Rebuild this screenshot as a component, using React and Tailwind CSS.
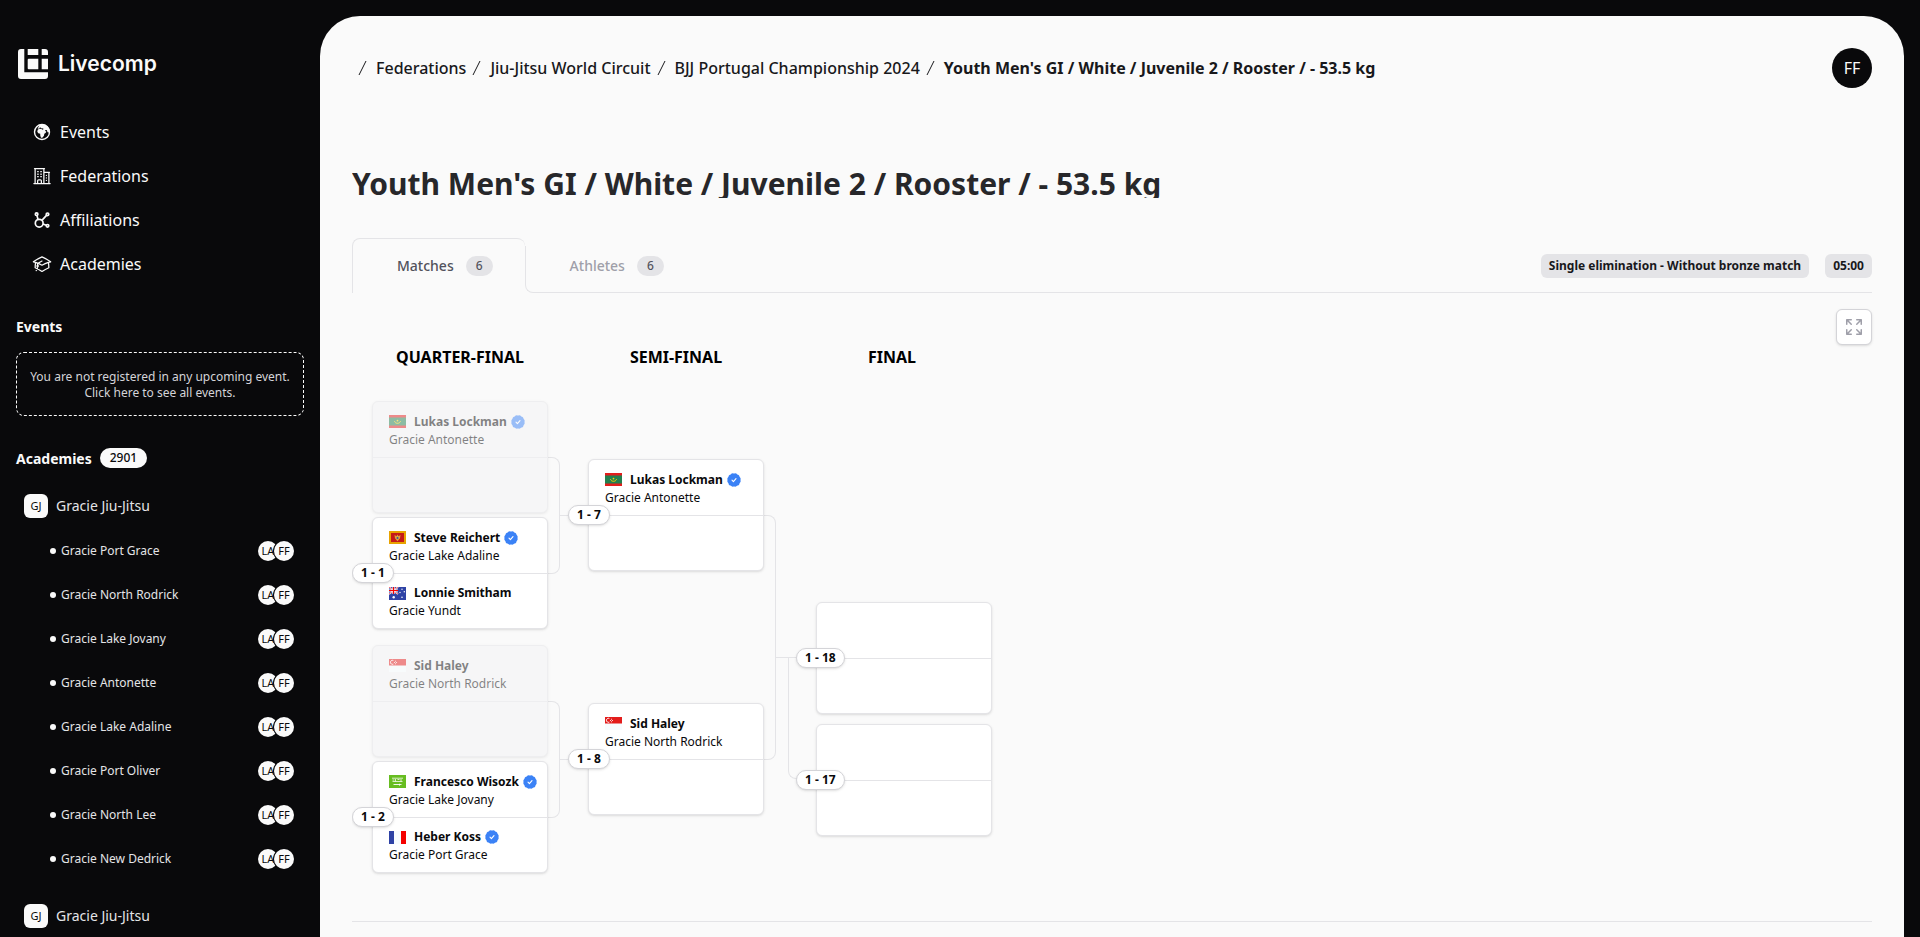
import React, { useState } from 'react';
import { HiOutlineBuildingOffice2, HiOutlineAcademicCap, HiMiniArrowsPointingOut } from 'react-icons/hi2';

const TITLE = "Youth Men's GI / White / Juvenile 2 / Rooster / - 53.5 kg";

const GlobeIcon = () => (
  <svg viewBox="0 0 20 20" className="w-5 h-5" aria-hidden="true">
    <circle cx="10" cy="10" r="7.5" fill="none" stroke="currentColor" strokeWidth="1.4" />
    <path fill="currentColor" d="M7.2 3.2C11 1.4 16.8 3.6 17.6 8.4l-.5 2.2-1.5-.3-.9-2.2-1.6-.2.3 1.2 1 .6-.9 1.2-1.2.9-.3 2-1.7 1.9-1.3.1-.7-2.1-.1-2-1.9-.5-1-1.5.4-1.9 1.5-1.1 2.4.2.6.8 1.3-.4-.4-1-1.5.1-1-1-1.1.3-.3.9-1.3.1-.2-1 1.1-.7z" />
  </svg>
);

const NodesIcon = () => (
  <svg viewBox="0 0 20 20" className="w-5 h-5" fill="none" stroke="currentColor" strokeWidth="1.7" aria-hidden="true">
    <circle cx="7.2" cy="13.2" r="3.9" />
    <circle cx="4.6" cy="4.2" r="1.3" />
    <circle cx="15.5" cy="4.3" r="1.3" />
    <circle cx="15.5" cy="15.8" r="1.3" />
    <path d="M5 5.6l1 3.8M14.500 5.300l-4.600 5M11 14l3.200 1.300" />
  </svg>
);

const Logo = () => (
  <svg viewBox="0 0 30 30" className="w-[30px] h-[30px]" fill="currentColor" aria-hidden="true">
    <path d="M3 0h3.300v23.300H30V27a3 3 0 0 1-3 3H3a3 3 0 0 1-3-3V3a3 3 0 0 1 3-3z" />
    <path d="M9.700 0h10.600v6H9.700zM23.700 0H27a3 3 0 0 1 3 3v3h-6.300zM10.700 9.700h9.600v10.600h-9.600a1 1 0 0 1-1-1v-8.600a1 1 0 0 1 1-1zM23.700 9.700H30v10.600h-6.300z" />
  </svg>
);

const VerifiedIcon = () => (
  <svg viewBox="0 0 14 14" className="ml-1 w-[14px] h-[14px] shrink-0" aria-label="Verified">
    <g fill="#3b82f6">
      <rect x="1.500" y="1.500" width="11" height="11" rx="2.600" />
      <rect x="1.500" y="1.500" width="11" height="11" rx="2.600" transform="rotate(30 7 7)" />
      <rect x="1.500" y="1.500" width="11" height="11" rx="2.600" transform="rotate(60 7 7)" />
    </g>
    <path d="M5 7.200l1.400 1.400L9 5.600" fill="none" stroke="#fff" strokeWidth="1.100" strokeLinecap="round" strokeLinejoin="round" />
  </svg>
);

const flags = {
  mr: (
    <>
      <path fill="#22804f" d="M0 0h17v13H0z" />
      <path fill="#e31d1c" d="M0 0h17v2.600H0zM0 10.400h17V13H0z" />
      <path d="M5.500 6.200c.6 2.800 5.400 2.800 6 0" fill="none" stroke="#fecf00" strokeWidth="1" />
      <circle cx="8.500" cy="5.600" r=".9" fill="#fecf00" />
    </>
  ),
  me: (
    <>
      <path fill="#e8a300" d="M0 0h17v13H0z" />
      <path fill="#c51918" d="M2 2h13v9H2z" />
      <path d="M5.500 4l2 1.200 1-1.700 1 1.700 2-1.200-.5 3.200-2.500 3-2.500-3z" fill="#e0a53c" />
      <path d="M7.700 6h1.600v2H7.700z" fill="#3d58a0" />
    </>
  ),
  au: (
    <>
      <path fill="#2e42a5" d="M0 0h17v13H0z" />
      <path d="M0 0l9 7M9 0L0 7" stroke="#fff" strokeWidth="1.600" />
      <path d="M0 0l9 7M9 0L0 7" stroke="#f50100" strokeWidth=".6" />
      <path d="M4.500 0v7M0 3.500h9" stroke="#fff" strokeWidth="2.200" />
      <path d="M4.500 0v7M0 3.500h9" stroke="#f50100" strokeWidth="1.200" />
      <g fill="#f7fcff">
        <circle cx="4.700" cy="10.200" r="1.200" />
        <circle cx="13" cy="2.300" r=".7" />
        <circle cx="11" cy="5.500" r=".7" />
        <circle cx="15.300" cy="4.700" r=".7" />
        <circle cx="13" cy="10.300" r=".8" />
      </g>
    </>
  ),
  sg: (
    <>
      <path fill="#f7fcff" d="M0 0h17v13H0z" />
      <path fill="#e31d1c" d="M0 0h17v6.500H0z" />
      <path d="M4.300 1.500a2 2 0 1 0 0 3.600" fill="none" stroke="#fff" strokeWidth="1" />
      <path d="M6 1.700h1v1H6zM5 3h1v1H5zM7 3h1v1H7zM6 4.300h1v1H6z" fill="#fff" opacity=".8" />
    </>
  ),
  sa: (
    <>
      <path fill="#67bd21" d="M0 0h17v13H0z" />
      <path d="M3 3.200h11M3.500 5h2M6.500 4v2.500M8.500 4.500h2M12 4v2.500M3.500 6.500h10" stroke="#fff" strokeWidth=".9" opacity=".85" />
      <path d="M4.500 9.500h8M10.500 8.800v1.800" stroke="#fff" strokeWidth=".9" />
    </>
  ),
  fr: (
    <>
      <path fill="#f7fcff" d="M0 0h17v13H0z" />
      <path fill="#2e42a5" d="M0 0h5v13H0z" />
      <path fill="#f50100" d="M12 0h5v13h-5z" />
    </>
  ),
};

const navItems = [
  { label: 'Events', icon: <GlobeIcon /> },
  { label: 'Federations', icon: <HiOutlineBuildingOffice2 className="w-5 h-5" /> },
  { label: 'Affiliations', icon: <NodesIcon /> },
  { label: 'Academies', icon: <HiOutlineAcademicCap className="w-5 h-5" /> },
];

const affiliations = [
  {
    name: 'Gracie Jiu-Jitsu',
    academies: ['Gracie Port Grace', 'Gracie North Rodrick', 'Gracie Lake Jovany', 'Gracie Antonette', 'Gracie Lake Adaline', 'Gracie Port Oliver', 'Gracie North Lee', 'Gracie New Dedrick'],
  },
  { name: 'Gracie Jiu-Jitsu', academies: [] },
];

const lukas = { name: 'Lukas Lockman', academy: 'Gracie Antonette', flag: 'mr', verified: true };
const steve = { name: 'Steve Reichert', academy: 'Gracie Lake Adaline', flag: 'me', verified: true };
const lonnie = { name: 'Lonnie Smitham', academy: 'Gracie Yundt', flag: 'au' };
const sid = { name: 'Sid Haley', academy: 'Gracie North Rodrick', flag: 'sg' };
const francesco = { name: 'Francesco Wisozk', academy: 'Gracie Lake Jovany', flag: 'sa', verified: true };
const heber = { name: 'Heber Koss', academy: 'Gracie Port Grace', flag: 'fr', verified: true };

const quarterFinals = [
  [{ top: lukas, bye: true }, { id: '1 - 1', top: steve, bottom: lonnie }],
  [{ top: sid, bye: true }, { id: '1 - 2', top: francesco, bottom: heber }],
];
const semiFinals = [{ id: '1 - 7', top: lukas }, { id: '1 - 8', top: sid }];
const finals = [{ id: '1 - 18' }, { id: '1 - 17' }];

const crumbs = ['Federations', 'Jiu-Jitsu World Circuit', 'BJJ Portugal Championship 2024'];

const Avatar = ({ children }) => (
  <span className="flex w-5 h-5 items-center justify-center rounded-full bg-zinc-50 text-[11px] text-zinc-950 ring-1 ring-zinc-950">
    {children}
  </span>
);

const Sidebar = () => (
  <aside className="w-80 shrink-0 px-4 pt-[49px] overflow-hidden text-zinc-50">
    <a href="#" className="flex items-center gap-[10px] ml-[2px] mb-[31px]">
      <Logo />
      <span className="font-['Inter',sans-serif] text-[21px] leading-7 font-semibold">Livecomp</span>
    </a>
    <nav>
      {navItems.map(item => (
        <a key={item.label} href="#" className="flex h-11 items-center gap-2 px-4">
          {item.icon}
          <span>{item.label}</span>
        </a>
      ))}
    </nav>

    <h2 className="mt-[31px] text-sm font-bold">Events</h2>
    <a href="#" className="mt-[15px] flex h-16 items-center justify-center rounded-lg border border-dashed border-zinc-50 pt-0.5 text-center text-xs text-zinc-300">
      <span>You are not registered in any upcoming event.<br />Click here to see all events.</span>
    </a>

    <div className="mt-8 mb-4 flex h-5 items-center gap-2">
      <h2 className="pt-0.5 text-sm font-bold">Academies</h2>
      <span className="rounded-full bg-zinc-50 px-[10px] text-xs leading-5 font-medium text-zinc-950">2901</span>
    </div>
    {affiliations.map((aff, i) => (
      <section key={i} className="mb-[13px]">
        <a href="#" className="mb-px flex h-11 items-center gap-2 px-2">
          <span className="flex w-6 h-6 items-center justify-center rounded-md bg-zinc-50 text-[11px] text-zinc-950">GJ</span>
          <span className="text-sm text-zinc-200">{aff.name}</span>
        </a>
        <ul>
          {aff.academies.map(name => (
            <li key={name}>
              <a href="#" className="flex h-11 items-center gap-[5px] pl-[34px] pr-[10px] text-xs text-zinc-200">
                <span className="w-1.5 h-1.5 rounded-full bg-zinc-50" />
                <span className="flex-1">{name}</span>
                <span className="flex -space-x-1">
                  <Avatar>LA</Avatar>
                  <Avatar>FF</Avatar>
                </span>
              </a>
            </li>
          ))}
        </ul>
      </section>
    ))}
  </aside>
);

const Slash = () => (
  <svg viewBox="0 0 20 20" className="w-5 h-5 shrink-0" stroke="currentColor" strokeWidth="1" aria-hidden="true">
    <path d="M7 17l7-14" />
  </svg>
);

const Breadcrumbs = () => (
  <nav aria-label="Breadcrumb">
    <ol className="flex items-center text-zinc-900">
      {crumbs.map(c => (
        <li key={c} className="flex items-center gap-1">
          <Slash />
          <a href="#" className="font-medium">{c}</a>
        </li>
      ))}
      <li className="flex items-center gap-1">
        <Slash />
        <a href="#" aria-current="page" className="font-bold">{TITLE}</a>
      </li>
    </ol>
  </nav>
);

const Count = ({ children }) => (
  <span className="rounded-full bg-zinc-200 px-[10px] text-xs leading-5 font-medium text-zinc-600">{children}</span>
);

const Tag = ({ children }) => (
  <span className="rounded-md bg-zinc-200 px-2 text-xs leading-6 font-bold text-zinc-900">{children}</span>
);

const Athlete = ({ athlete }) => {
  if (!athlete) return null;
  return (
    <>
      <div className="flex items-center leading-[18px]">
        <svg viewBox="0 0 17 13" className="mr-2 w-[17px] h-[13px] shrink-0" aria-hidden="true">{flags[athlete.flag]}</svg>
        <span className="font-bold whitespace-nowrap">{athlete.name}</span>
        {athlete.verified && <VerifiedIcon />}
      </div>
      <div className="leading-[18px]">{athlete.academy}</div>
    </>
  );
};

const MatchCard = ({ match }) => (
  <div className={`relative h-28 w-44 rounded-md border border-zinc-200 text-xs text-zinc-950 shadow-sm ${match.bye ? 'bg-zinc-100 opacity-50' : 'bg-white'}`}>
    <div className="flex h-14 flex-col justify-center border-b border-zinc-200 px-4 pt-0.5">
      <Athlete athlete={match.top} />
    </div>
    <div className="flex h-[54px] flex-col justify-center px-4 pt-0.5">
      <Athlete athlete={match.bottom} />
    </div>
    {match.id && (
      <a href="#" className="absolute top-1/2 -left-[21px] -translate-y-1/2 rounded-full border border-zinc-300 bg-white px-2 leading-[18px] font-bold whitespace-nowrap shadow-sm">
        {match.id}
      </a>
    )}
  </div>
);

const RoundTitle = ({ children }) => (
  <h3 className="mb-8 text-center font-bold text-black uppercase">{children}</h3>
);

const Bracket = () => (
  <div className="flex overflow-x-auto pb-2">
    <section className="w-54 shrink-0">
      <RoundTitle>Quarter-final</RoundTitle>
      <div className="flex flex-col gap-4">
        {quarterFinals.map((pair, i) => (
          <div key={i} className="flex pl-5">
            <div className="flex flex-col gap-1">
              {pair.map((m, j) => <MatchCard key={j} match={m} />)}
            </div>
            <div className="mt-14 mb-[55px] w-3 rounded-r-lg border border-l-0 border-zinc-200" />
            <div className="h-px w-2 self-center bg-zinc-200" />
          </div>
        ))}
      </div>
    </section>

    <section className="w-54 shrink-0">
      <RoundTitle>Semi-final</RoundTitle>
      <div className="flex pl-5">
        <div className="flex flex-col gap-[132px] py-[58px]">
          {semiFinals.map(m => <MatchCard key={m.id} match={m} />)}
        </div>
        <div className="mt-[114px] mb-[113px] w-3 rounded-r-lg border border-l-0 border-zinc-200" />
        <div className="mt-[256px] h-px w-2 bg-zinc-200" />
      </div>
    </section>

    <section className="w-54 shrink-0">
      <RoundTitle>Final</RoundTitle>
      <div className="flex">
        <div className="mt-[256px] h-px w-1 bg-zinc-200" />
        <div className="mt-[256px] h-[122px] w-7 rounded-bl-lg border border-r-0 border-zinc-200" />
        <div className="flex flex-col gap-[10px] pt-[201px]">
          {finals.map(m => <MatchCard key={m.id} match={m} />)}
        </div>
      </div>
    </section>
  </div>
);

const App = () => {
  const [tab, setTab] = useState('matches');

  return (
    <div className="flex h-screen overflow-hidden bg-zinc-950 font-['Noto_Sans',sans-serif] text-base">
      <Sidebar />
      <main className="mt-4 mr-4 min-w-0 flex-1 rounded-t-[40px] bg-[#fafafa] px-8 pt-8">
        <header className="flex items-center justify-between">
          <Breadcrumbs />
          <button type="button" className="w-10 h-10 rounded-full bg-zinc-950 text-zinc-50">FF</button>
        </header>

        <h1 className="mt-[82px] truncate text-3xl leading-7 font-bold text-zinc-800">{TITLE}</h1>

        <div role="tablist" className="mt-10 flex text-sm">
          <button type="button" role="tab" aria-selected={tab === 'matches'} onClick={() => setTab('matches')}
            className="flex h-[55px] items-center gap-3 rounded-t-lg border-t border-l border-zinc-200 pl-11 pr-8 font-medium text-zinc-600">
            Matches <Count>6</Count>
          </button>
          <div className="mt-2 flex flex-1 items-center justify-between rounded-bl-lg border-b border-l border-zinc-200 pb-[7px]">
            <button type="button" role="tab" aria-selected={tab === 'athletes'} onClick={() => setTab('athletes')}
              className="flex items-center gap-3 pl-11 font-medium text-zinc-400">
              Athletes <Count>6</Count>
            </button>
            <div className="flex gap-4">
              <Tag>Single elimination - Without bronze match</Tag>
              <Tag>05:00</Tag>
            </div>
          </div>
        </div>

        <div className="mt-4 flex justify-end">
          <button type="button" aria-label="Fullscreen" className="flex w-9 h-9 items-center justify-center rounded-md border border-zinc-300 bg-white text-zinc-400 shadow-sm">
            <HiMiniArrowsPointingOut className="w-5 h-5" />
          </button>
        </div>
        <Bracket />
        <hr className="mt-10 border-zinc-200" />
      </main>
    </div>
  );
};
export default App;
